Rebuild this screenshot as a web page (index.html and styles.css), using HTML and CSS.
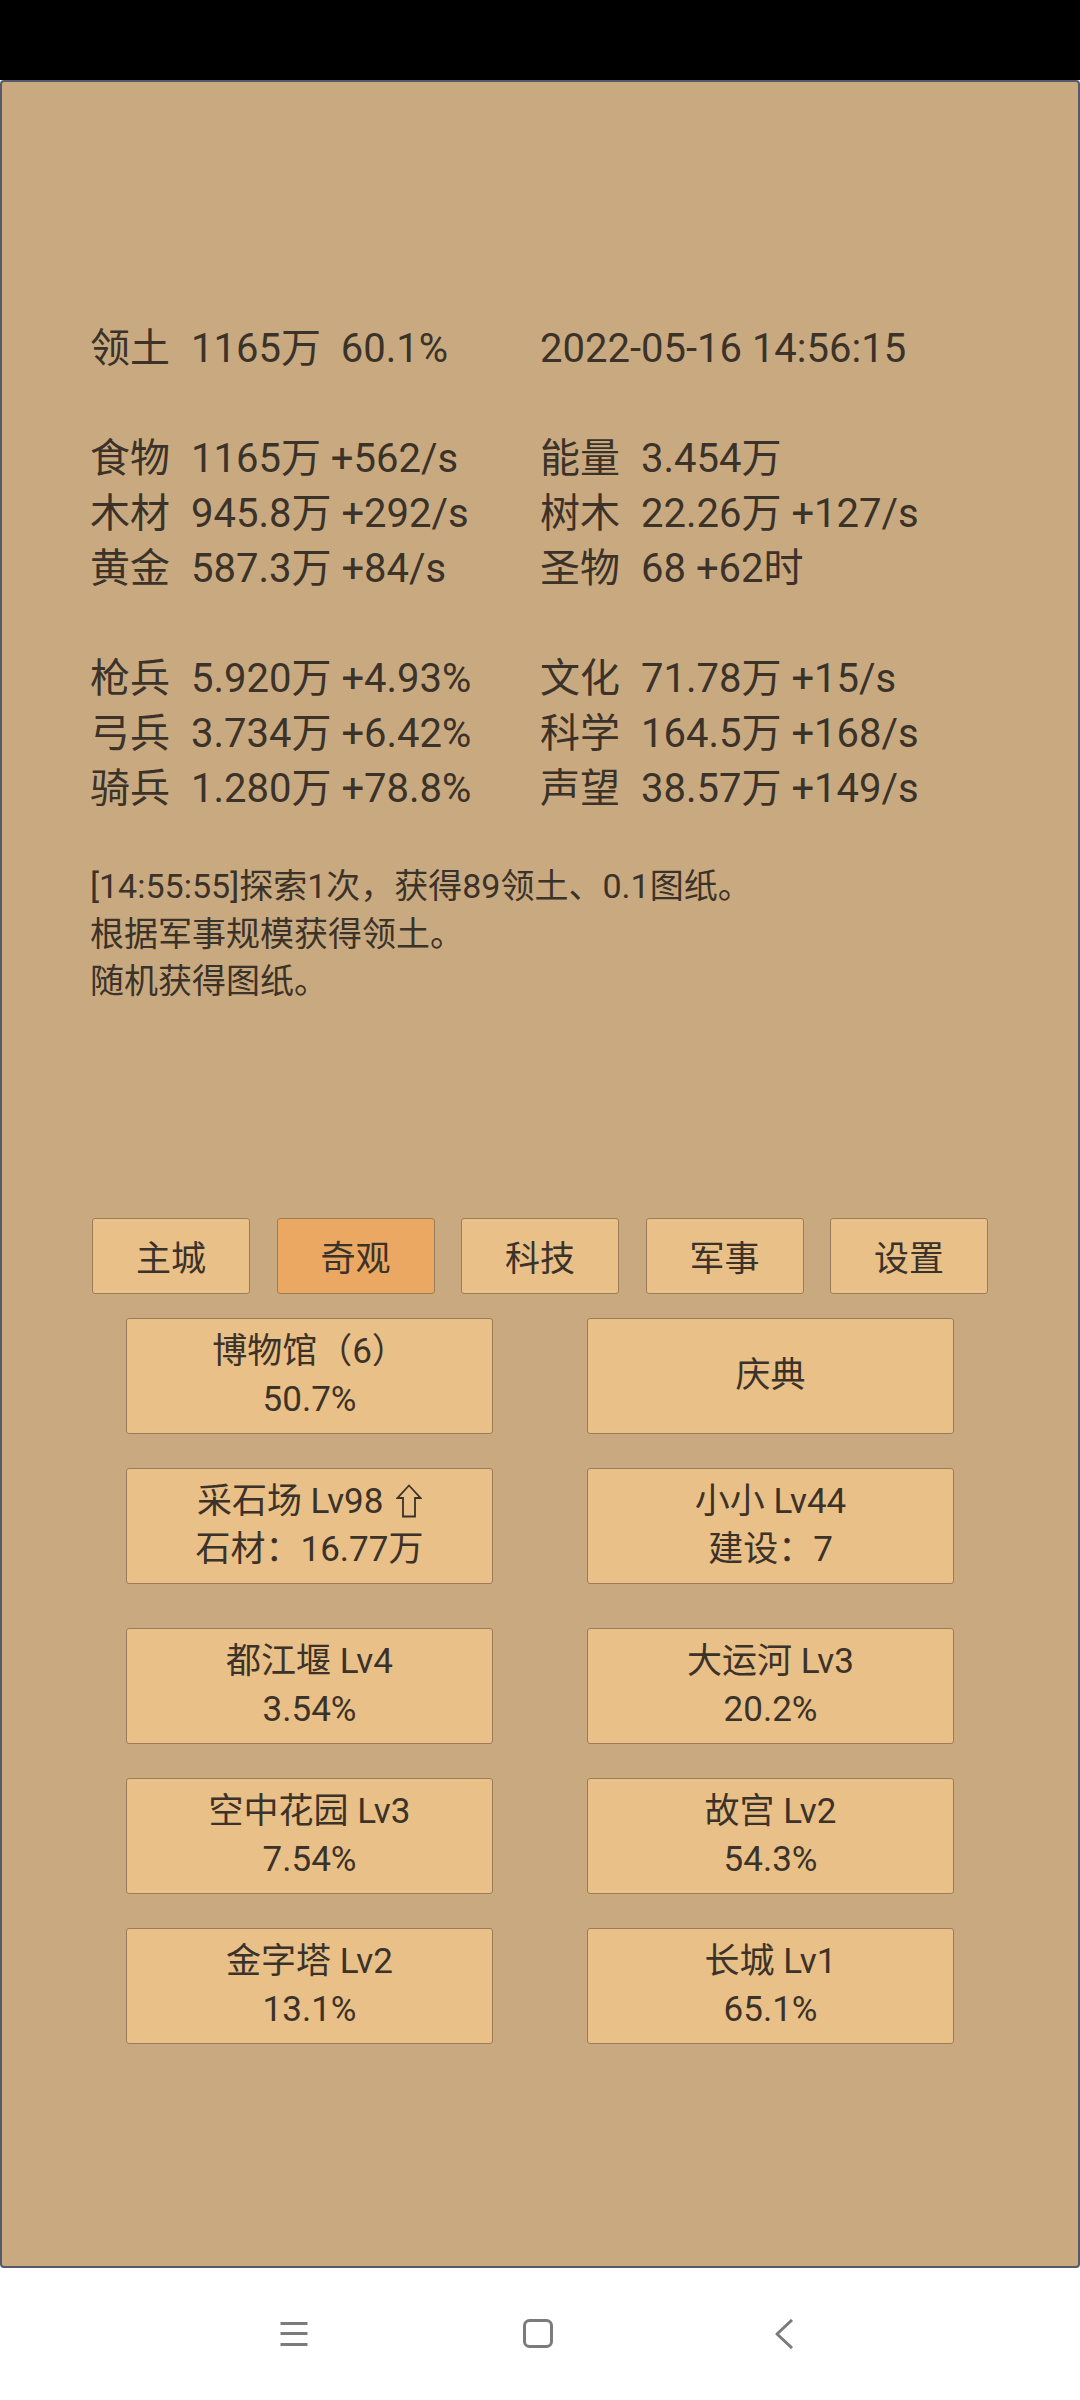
FILE: index.html
```html
<!DOCTYPE html>
<html lang="zh-CN">
<head>
<meta charset="utf-8">
<title>奇观</title>
<link rel="stylesheet" href="styles.css">
</head>
<body>
<div class="status"></div>
<div class="app">
  <div class="stats">
    <div class="row"><div class="cell"><span class="lbl">领土</span>1165万&nbsp; 60.1%</div><div class="cell">2022-05-16 14:56:15</div></div>
    <div class="row"></div>
    <div class="row"><div class="cell"><span class="lbl">食物</span>1165万 +562/s</div><div class="cell"><span class="lbl">能量</span>3.454万</div></div>
    <div class="row"><div class="cell"><span class="lbl">木材</span>945.8万 +292/s</div><div class="cell"><span class="lbl">树木</span>22.26万 +127/s</div></div>
    <div class="row"><div class="cell"><span class="lbl">黄金</span>587.3万 +84/s</div><div class="cell"><span class="lbl">圣物</span>68 +62时</div></div>
    <div class="row"></div>
    <div class="row"><div class="cell"><span class="lbl">枪兵</span>5.920万 +4.93%</div><div class="cell"><span class="lbl">文化</span>71.78万 +15/s</div></div>
    <div class="row"><div class="cell"><span class="lbl">弓兵</span>3.734万 +6.42%</div><div class="cell"><span class="lbl">科学</span>164.5万 +168/s</div></div>
    <div class="row"><div class="cell"><span class="lbl">骑兵</span>1.280万 +78.8%</div><div class="cell"><span class="lbl">声望</span>38.57万 +149/s</div></div>
  </div>
  <div class="log">
    <div>[14:55:55]探索1次，获得89领土、0.1图纸。</div>
    <div>根据军事规模获得领土。</div>
    <div>随机获得图纸。</div>
  </div>
  <div class="tabs">
    <div class="tab">主城</div>
    <div class="tab active">奇观</div>
    <div class="tab">科技</div>
    <div class="tab">军事</div>
    <div class="tab">设置</div>
  </div>
  <div class="cards">
    <div class="card-row">
      <div class="card"><div>博物馆（6）</div><div>50.7%</div></div>
      <div class="card"><div>庆典</div></div>
    </div>
    <div class="card-row">
      <div class="card"><div class="line">采石场 Lv98 <svg class="up" width="26" height="34" viewBox="0 0 26 34"><path d="M13 1.5L24.5 14H19V32.5H7V14H1.5Z" fill="none" stroke="#3b3229" stroke-width="1.8" stroke-linejoin="miter"/></svg></div><div>石材：16.77万</div></div>
      <div class="card"><div>小小 Lv44</div><div>建设：7</div></div>
    </div>
    <div class="card-row wide-gap">
      <div class="card"><div>都江堰 Lv4</div><div>3.54%</div></div>
      <div class="card"><div>大运河 Lv3</div><div>20.2%</div></div>
    </div>
    <div class="card-row">
      <div class="card"><div>空中花园 Lv3</div><div>7.54%</div></div>
      <div class="card"><div>故宫 Lv2</div><div>54.3%</div></div>
    </div>
    <div class="card-row">
      <div class="card"><div>金字塔 Lv2</div><div>13.1%</div></div>
      <div class="card"><div>长城 Lv1</div><div>65.1%</div></div>
    </div>
  </div>
</div>
<div class="navbar">
  <svg class="ico menu" width="28" height="28" viewBox="0 0 28 28"><path d="M0.5 3.5H27.5M0.5 13.5H27.5M0.5 24.5H27.5" stroke="#7b7b7b" stroke-width="3" fill="none"/></svg>
  <svg class="ico home" width="30" height="30" viewBox="0 0 30 30"><rect x="1.5" y="1.5" width="27" height="26" rx="5" stroke="#7b7b7b" stroke-width="3" fill="none"/></svg>
  <svg class="ico back" width="20" height="30" viewBox="0 0 20 30"><path d="M18 1L3 15L18 29" stroke="#7b7b7b" stroke-width="3" fill="none" stroke-linejoin="round"/></svg>
</div>
</body>
</html>
```

FILE: styles.css
```css
html, body {
  margin: 0;
  padding: 0;
  background: #ffffff;
}

body {
  width: 1080px;
  height: 2400px;
  overflow: hidden;
  font-family: Roboto, "Noto Sans CJK SC", "Noto Sans", sans-serif;
  color: #3b3229;
}

.status {
  height: 80px;
  background: #000000;
}

.app {
  box-sizing: border-box;
  width: 1080px;
  height: 2188px;
  background: #c9aa80;
  border: 2px solid #545a6a;
  border-radius: 4px;
}

.stats {
  padding-top: 239px;
  padding-left: 88px;
  font-size: 40px;
  line-height: 55px;
}

.row {
  display: flex;
  height: 55px;
}

.cell {
  width: 450px;
  white-space: nowrap;
}

.lbl {
  display: inline-block;
  width: 101px;
}

.log {
  margin-top: 47px;
  padding-left: 88px;
  font-size: 34px;
  line-height: 47.5px;
}

.tabs {
  display: flex;
  gap: 26.5px;
  margin-top: 212px;
  padding-left: 90px;
}

.tab {
  box-sizing: border-box;
  width: 158px;
  height: 76px;
  display: flex;
  align-items: center;
  justify-content: center;
  background: #e9c087;
  border: 1.5px solid #9c7c58;
  border-radius: 3px;
  font-size: 35px;
}

.tab.active {
  background: #eba862;
}

.cards {
  margin-top: 24px;
  padding-left: 124px;
}

.card-row {
  display: flex;
  gap: 94px;
  margin-bottom: 34px;
}

.card-row.wide-gap {
  margin-top: 44px;
}

.card {
  box-sizing: border-box;
  width: 367px;
  height: 116px;
  display: flex;
  flex-direction: column;
  align-items: center;
  justify-content: center;
  background: #e9c087;
  border: 1.5px solid #9c7c58;
  border-radius: 3px;
  font-size: 35px;
  line-height: 48px;
}

.line {
  display: flex;
  align-items: center;
  white-space: pre;
}

.up {
  display: block;
  margin-left: 4px;
  margin-top: -2px;
}

.navbar {
  height: 132px;
  display: flex;
  align-items: center;
  padding-left: 280px;
}

.ico {
  display: block;
}

.home {
  margin-left: 215px;
}

.back {
  margin-left: 221px;
}
```
